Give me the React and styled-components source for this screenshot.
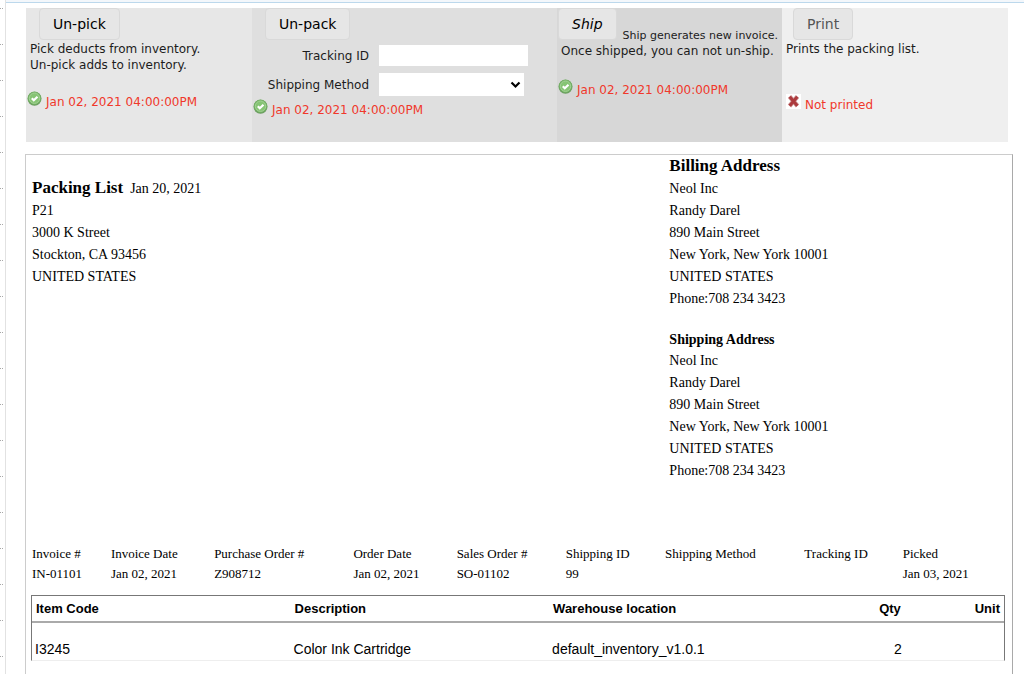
import { useState } from "react";
import styled, { createGlobalStyle } from "styled-components";

const GlobalStyle = createGlobalStyle`
  * {
    box-sizing: border-box;
  }

  body {
    margin: 0;
    background: #fff;
    color: #000;
    font-family: "DejaVu Sans", Verdana, sans-serif;
    font-size: 12px;
  }

  p, h2, h3 {
    margin: 0;
  }
`;

const Page = styled.div`
  display: flex;
  height: 100vh;
  overflow: hidden;
`;

const SideStrip = styled.aside`
  flex: 0 0 5px;
  padding: 8px 2px 0 0;
  overflow: hidden;
`;

const SideRow = styled.div`
  height: 36px;
  border-top: 1px dotted #a8a8a8;
`;

const Content = styled.div`
  flex: 1;
  min-width: 0;
  display: flex;
  flex-direction: column;
  border-left: 1px solid #e2e2e2;
`;

const TopBar = styled.div`
  flex: 0 0 3px;
  background: #f3f7fb;
  border-bottom: 1px solid #bcd8ec;
`;

const Main = styled.main`
  flex: 1;
  display: flex;
  flex-direction: column;
  padding: 5px 11px 0 19px;
`;

const Actions = styled.section`
  display: grid;
  grid-template-columns:
    minmax(0, 226fr) minmax(0, 305fr) minmax(0, 225fr)
    minmax(0, 226fr);
  min-height: 134px;
  margin: 0 5px 12px 1px;
`;

const Panel = styled.div`
  display: flex;
  flex-direction: column;
  align-items: flex-start;
  background: ${(props) => props.$tone};
`;

const ActionButton = styled.button`
  height: 32px;
  margin-left: ${(props) => props.$indent || "13px"};
  padding: 0 13px;
  border: 1px solid #d9d9d9;
  border-radius: 4px;
  background: #e6e6e6;
  color: ${(props) => (props.$muted ? "#555" : "#000")};
  font-family: inherit;
  font-size: 14px;
  font-style: ${(props) => (props.$italic ? "italic" : "normal")};
  white-space: nowrap;
`;

const ButtonLine = styled.div`
  display: flex;
  gap: 6px;
  height: 34px;
  white-space: nowrap;

  span {
    align-self: flex-end;
    color: #1c1c1c;
    font-size: 11px;
  }
`;

const Note = styled.p`
  padding: 1px 0 0 4px;
  color: #1c1c1c;
  line-height: 16px;
`;

const Status = styled.p`
  display: flex;
  align-items: flex-start;
  gap: 4px;
  margin-top: ${(props) => props.$top};
  padding-left: ${(props) => (props.$inset ? "4px" : "1px")};
  color: #f0382b;
  line-height: 16px;

  span {
    padding-top: 3px;
  }
`;

const Fields = styled.div`
  display: grid;
  grid-template-columns: 117px 150px;
  gap: 7px 10px;
  align-items: center;
  margin-top: 5px;

  label {
    color: #1c1c1c;
    text-align: right;
  }
`;

const TextInput = styled.input`
  width: 149px;
  height: 21px;
  padding: 0 4px;
  border: 0;
  background: #fff;
`;

const SelectBox = styled.div`
  position: relative;
  width: 145px;

  svg {
    position: absolute;
    top: 8px;
    right: 3px;
    pointer-events: none;
  }
`;

const Select = styled.select`
  display: block;
  width: 100%;
  height: 23px;
  border: 0;
  border-radius: 0;
  background: #fff;
  appearance: none;
`;

const Sheet = styled.article`
  flex: 1;
  padding: 0 7px 0 5px;
  border: 1px solid #ccc;
  border-right: 1px solid #a9a9a9;
  border-bottom: 0;
  font-family: "Liberation Serif", "Times New Roman", serif;
  font-size: 14px;
  line-height: 22px;
`;

const Addresses = styled.div`
  display: grid;
  grid-template-columns: 638fr 336fr;
  min-height: 389px;
  padding-left: 1px;
`;

const Sender = styled.div`
  padding-top: 22px;
`;

const Title = styled.h2`
  display: inline;
  font-size: 17px;
`;

const SmallTitle = styled.h3`
  margin-top: 20px;
  font-size: 14px;
  line-height: 20px;
`;

const Details = styled.table`
  width: 100%;
  border-collapse: collapse;
  table-layout: fixed;
  line-height: 20px;
  white-space: nowrap;

  th,
  td {
    height: 20px;
    padding: 0 0 0 1px;
    font-size: 13px;
    font-weight: 400;
    text-align: left;
  }
`;

const Items = styled.table`
  width: 100%;
  margin-top: 11px;
  border: 1px solid #777;
  border-bottom-color: #eee;
  border-spacing: 0;
  table-layout: fixed;
  font-family: "Liberation Sans", Arial, sans-serif;
  line-height: 18px;

  th {
    height: 27px;
    padding: 0 4px;
    border-bottom: 2px solid #aaa;
    font-size: 13px;
    text-align: left;
  }

  td {
    height: 37px;
    padding: 15px 3px 0;
    font-size: 14px;
  }

  .num {
    text-align: right;
  }
`;

const details = [
  { label: "Invoice #", value: "IN-01101", width: "8.1%" },
  { label: "Invoice Date", value: "Jan 02, 2021", width: "10.6%" },
  { label: "Purchase Order #", value: "Z908712", width: "14.3%" },
  { label: "Order Date", value: "Jan 02, 2021", width: "10.6%" },
  { label: "Sales Order #", value: "SO-01102", width: "11.2%" },
  { label: "Shipping ID", value: "99", width: "10.2%" },
  { label: "Shipping Method", value: "", width: "14.3%" },
  { label: "Tracking ID", value: "", width: "10.1%" },
  { label: "Picked", value: "Jan 03, 2021", width: "10.6%" },
];

const addressLines = [
  "Neol Inc",
  "Randy Darel",
  "890 Main Street",
  "New York, New York 10001",
  "UNITED STATES",
  "Phone:708 234 3423",
];

function DoneIcon() {
  return (
    <svg width="15" height="15" viewBox="0 0 15 15" aria-hidden="true">
      <circle cx="7.5" cy="7.7" r="7" fill="#6a9c60" />
      <circle cx="7.5" cy="7.2" r="6.6" fill="#74b064" />
      <circle cx="7.5" cy="7.2" r="5.2" fill="#86c474" stroke="#a3d296" />
      <path
        d="M4.8 7.2l2 2.1 3.7-3.5"
        fill="none"
        stroke="#fff"
        strokeWidth="2.2"
      />
    </svg>
  );
}

function CrossIcon() {
  return (
    <svg width="15" height="15" viewBox="0 0 15 15" aria-hidden="true">
      <rect width="15" height="15" fill="#fff" />
      <path d="M3.5 2.5l8 9.5M11.5 2.5l-8 9.5" stroke="#cf9a9a" strokeWidth="4.4" />
      <path d="M3.7 2.7l7.6 9M11.3 2.7l-7.6 9" stroke="#ac3a3d" strokeWidth="3" />
    </svg>
  );
}

function Address() {
  return addressLines.map((line) => <div key={line}>{line}</div>);
}

export default function App() {
  const [trackingId, setTrackingId] = useState("");

  return (
    <Page>
      <GlobalStyle />
      <SideStrip>
        {Array.from({ length: 20 }, (_, i) => (
          <SideRow key={i} />
        ))}
      </SideStrip>
      <Content>
        <TopBar />
        <Main>
          <Actions>
            <Panel $tone="#e7e7e7">
              <ActionButton type="button">Un-pick</ActionButton>
              <Note>
                Pick deducts from inventory.
                <br />
                Un-pick adds to inventory.
              </Note>
              <Status $top="18px">
                <DoneIcon />
                <span>Jan 02, 2021 04:00:00PM</span>
              </Status>
            </Panel>

            <Panel $tone="#dfdfdf">
              <ActionButton type="button">Un-pack</ActionButton>
              <Fields>
                <label htmlFor="tracking">Tracking ID</label>
                <TextInput
                  id="tracking"
                  value={trackingId}
                  onChange={(e) => setTrackingId(e.target.value)}
                />
                <label htmlFor="method">Shipping Method</label>
                <SelectBox>
                  <Select id="method">
                    <option value=""></option>
                  </Select>
                  <svg width="11" height="8" viewBox="0 0 11 8" aria-hidden="true">
                    <path
                      d="M1.5 1.5l4 4 4-4"
                      fill="none"
                      stroke="#000"
                      strokeWidth="2.2"
                    />
                  </svg>
                </SelectBox>
              </Fields>
              <Status $top="3px">
                <DoneIcon />
                <span>Jan 02, 2021 04:00:00PM</span>
              </Status>
            </Panel>

            <Panel $tone="#d7d7d7">
              <ButtonLine>
                <ActionButton type="button" $indent="1px" $italic>
                  Ship
                </ActionButton>
                <span>Ship generates new invoice.</span>
              </ButtonLine>
              <Note>Once shipped, you can not un-ship.</Note>
              <Status $top="20px">
                <DoneIcon />
                <span>Jan 02, 2021 04:00:00PM</span>
              </Status>
            </Panel>

            <Panel $tone="#efefef">
              <ActionButton type="button" $indent="11px" $muted>
                Print
              </ActionButton>
              <Note>Prints the packing list.</Note>
              <Status $top="37px" $inset>
                <CrossIcon />
                <span>Not printed</span>
              </Status>
            </Panel>
          </Actions>

          <Sheet>
            <Addresses>
              <Sender>
                <Title>Packing List</Title>&nbsp; Jan 20, 2021
                <div>P21</div>
                <div>3000 K Street</div>
                <div>Stockton, CA 93456</div>
                <div>UNITED STATES</div>
              </Sender>
              <div>
                <Title>Billing Address</Title>
                <Address />
                <SmallTitle>Shipping Address</SmallTitle>
                <Address />
              </div>
            </Addresses>

            <Details>
              <thead>
                <tr>
                  {details.map((item) => (
                    <th key={item.label} scope="col" width={item.width}>
                      {item.label}
                    </th>
                  ))}
                </tr>
              </thead>
              <tbody>
                <tr>
                  {details.map((item) => (
                    <td key={item.label}>{item.value}</td>
                  ))}
                </tr>
              </tbody>
            </Details>

            <Items>
              <thead>
                <tr>
                  <th width="26.6%">Item Code</th>
                  <th width="26.6%">Description</th>
                  <th width="26.6%">Warehouse location</th>
                  <th width="10%" className="num">Qty</th>
                  <th className="num">Unit</th>
                </tr>
              </thead>
              <tbody>
                <tr>
                  <td>I3245</td>
                  <td>Color Ink Cartridge</td>
                  <td>default_inventory_v1.0.1</td>
                  <td className="num">2</td>
                  <td></td>
                </tr>
              </tbody>
            </Items>
          </Sheet>
        </Main>
      </Content>
    </Page>
  );
}
